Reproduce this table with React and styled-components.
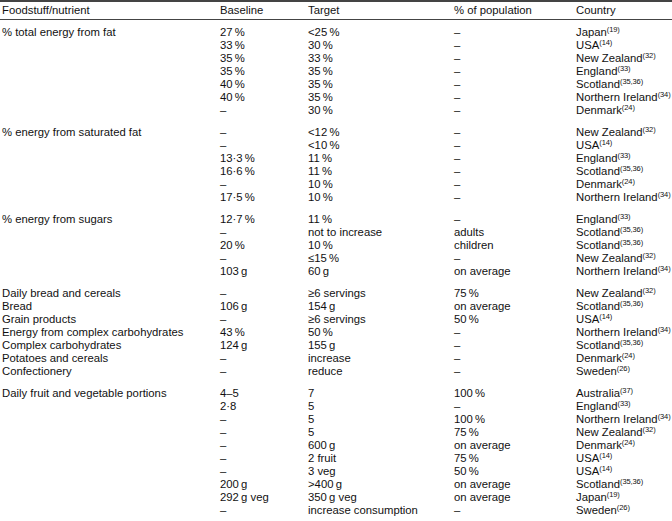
import React from 'react';
import styled, { createGlobalStyle } from 'styled-components';

const GlobalStyle = createGlobalStyle`
  html, body {
    margin: 0;
    padding: 0;
    background: #fff;
  }
  body {
    font-family: 'Liberation Sans', Arial, sans-serif;
    color: #111;
  }
`;

const Table = styled.table`
  width: 672px;
  border-collapse: collapse;
  table-layout: fixed;
  font-size: 11.3px;
  border-top: 2px solid #444;
  border-bottom: 2px solid #444;
`;

const HeadRow = styled.tr`
  border-bottom: 1px solid #444;
`;

const HeadCell = styled.th`
  font-weight: normal;
  text-align: left;
  height: 17px;
  padding: 0 0 0 ${(p) => (p.$first ? '2px' : '0')};
  line-height: 13px;
  vertical-align: middle;
`;

const Cell = styled.td`
  padding-top: ${(p) => (p.$top ? '6px' : p.$gap ? '9px' : '0')};
  padding-bottom: ${(p) => (p.$bottom ? '4px' : '0')};
  padding-left: ${(p) => (p.$first ? '2px' : '0')};
  padding-right: 0;
  line-height: 13px;
  height: 13px;
  vertical-align: bottom;
  white-space: nowrap;
`;

const Ref = styled.sup`
  font-size: 7.5px;
  line-height: 0;
  vertical-align: baseline;
  position: relative;
  top: -4px;
  letter-spacing: -0.1px;
`;

const sp = '\u2009';

const groups = [
  {
    label: '% total energy from fat',
    rows: [
      ['27' + sp + '%', '<25' + sp + '%', '–', 'Japan', '19'],
      ['33' + sp + '%', '30' + sp + '%', '–', 'USA', '14'],
      ['35' + sp + '%', '33' + sp + '%', '–', 'New Zealand', '32'],
      ['35' + sp + '%', '35' + sp + '%', '–', 'England', '33'],
      ['40' + sp + '%', '35' + sp + '%', '–', 'Scotland', '35,36'],
      ['40' + sp + '%', '35' + sp + '%', '–', 'Northern Ireland', '34'],
      ['–', '30' + sp + '%', '–', 'Denmark', '24'],
    ],
  },
  {
    label: '% energy from saturated fat',
    rows: [
      ['–', '<12' + sp + '%', '–', 'New Zealand', '32'],
      ['–', '<10' + sp + '%', '–', 'USA', '14'],
      ['13·3' + sp + '%', '11' + sp + '%', '–', 'England', '33'],
      ['16·6' + sp + '%', '11' + sp + '%', '–', 'Scotland', '35,36'],
      ['–', '10' + sp + '%', '–', 'Denmark', '24'],
      ['17·5' + sp + '%', '10' + sp + '%', '–', 'Northern Ireland', '34'],
    ],
  },
  {
    label: '% energy from sugars',
    rows: [
      ['12·7' + sp + '%', '11' + sp + '%', '–', 'England', '33'],
      ['–', 'not to increase', 'adults', 'Scotland', '35,36'],
      ['20' + sp + '%', '10' + sp + '%', 'children', 'Scotland', '35,36'],
      ['–', '≤15' + sp + '%', '–', 'New Zealand', '32'],
      ['103' + sp + 'g', '60' + sp + 'g', 'on average', 'Northern Ireland', '34'],
    ],
  },
  {
    labels: [
      'Daily bread and cereals',
      'Bread',
      'Grain products',
      'Energy from complex carbohydrates',
      'Complex carbohydrates',
      'Potatoes and cereals',
      'Confectionery',
    ],
    rows: [
      ['–', '≥6 servings', '75' + sp + '%', 'New Zealand', '32'],
      ['106' + sp + 'g', '154' + sp + 'g', 'on average', 'Scotland', '35,36'],
      ['–', '≥6 servings', '50' + sp + '%', 'USA', '14'],
      ['43' + sp + '%', '50' + sp + '%', '–', 'Northern Ireland', '34'],
      ['124' + sp + 'g', '155' + sp + 'g', '–', 'Scotland', '35,36'],
      ['–', 'increase', '–', 'Denmark', '24'],
      ['–', 'reduce', '–', 'Sweden', '26'],
    ],
  },
  {
    label: 'Daily fruit and vegetable portions',
    rows: [
      ['4–5', '7', '100' + sp + '%', 'Australia', '37'],
      ['2·8', '5', '–', 'England', '33'],
      ['–', '5', '100' + sp + '%', 'Northern Ireland', '34'],
      ['–', '5', '75' + sp + '%', 'New Zealand', '32'],
      ['–', '600' + sp + 'g', 'on average', 'Denmark', '24'],
      ['–', '2 fruit', '75' + sp + '%', 'USA', '14'],
      ['–', '3 veg', '50' + sp + '%', 'USA', '14'],
      ['200' + sp + 'g', '>400' + sp + 'g', 'on average', 'Scotland', '35,36'],
      ['292' + sp + 'g veg', '350' + sp + 'g veg', 'on average', 'Japan', '19'],
      ['–', 'increase consumption', '–', 'Sweden', '26'],
    ],
  },
];

const App = () => {
  const body = [];
  groups.forEach((g, gi) => {
    g.rows.forEach((r, ri) => {
      const label = g.labels ? g.labels[ri] : ri === 0 ? g.label : '';
      const top = gi === 0 && ri === 0;
      const gap = gi > 0 && ri === 0;
      const bottom = gi === groups.length - 1 && ri === g.rows.length - 1;
      const cells = [label, r[0], r[1], r[2]];
      body.push(
        <tr key={`${gi}-${ri}`}>
          {cells.map((c, ci) => (
            <Cell key={ci} $first={ci === 0} $top={top} $gap={gap} $bottom={bottom}>
              {c}
            </Cell>
          ))}
          <Cell $top={top} $gap={gap} $bottom={bottom}>
            {r[3]}
            <Ref>({r[4]})</Ref>
          </Cell>
        </tr>
      );
    });
  });

  return (
    <>
      <GlobalStyle />
      <Table>
        <colgroup>
          <col style={{ width: 220 }} />
          <col style={{ width: 88 }} />
          <col style={{ width: 146 }} />
          <col style={{ width: 122 }} />
          <col style={{ width: 96 }} />
        </colgroup>
        <thead>
          <HeadRow>
            <HeadCell $first>Foodstuff/nutrient</HeadCell>
            <HeadCell>Baseline</HeadCell>
            <HeadCell>Target</HeadCell>
            <HeadCell>% of population</HeadCell>
            <HeadCell>Country</HeadCell>
          </HeadRow>
        </thead>
        <tbody>{body}</tbody>
      </Table>
    </>
  );
};

export default App;
